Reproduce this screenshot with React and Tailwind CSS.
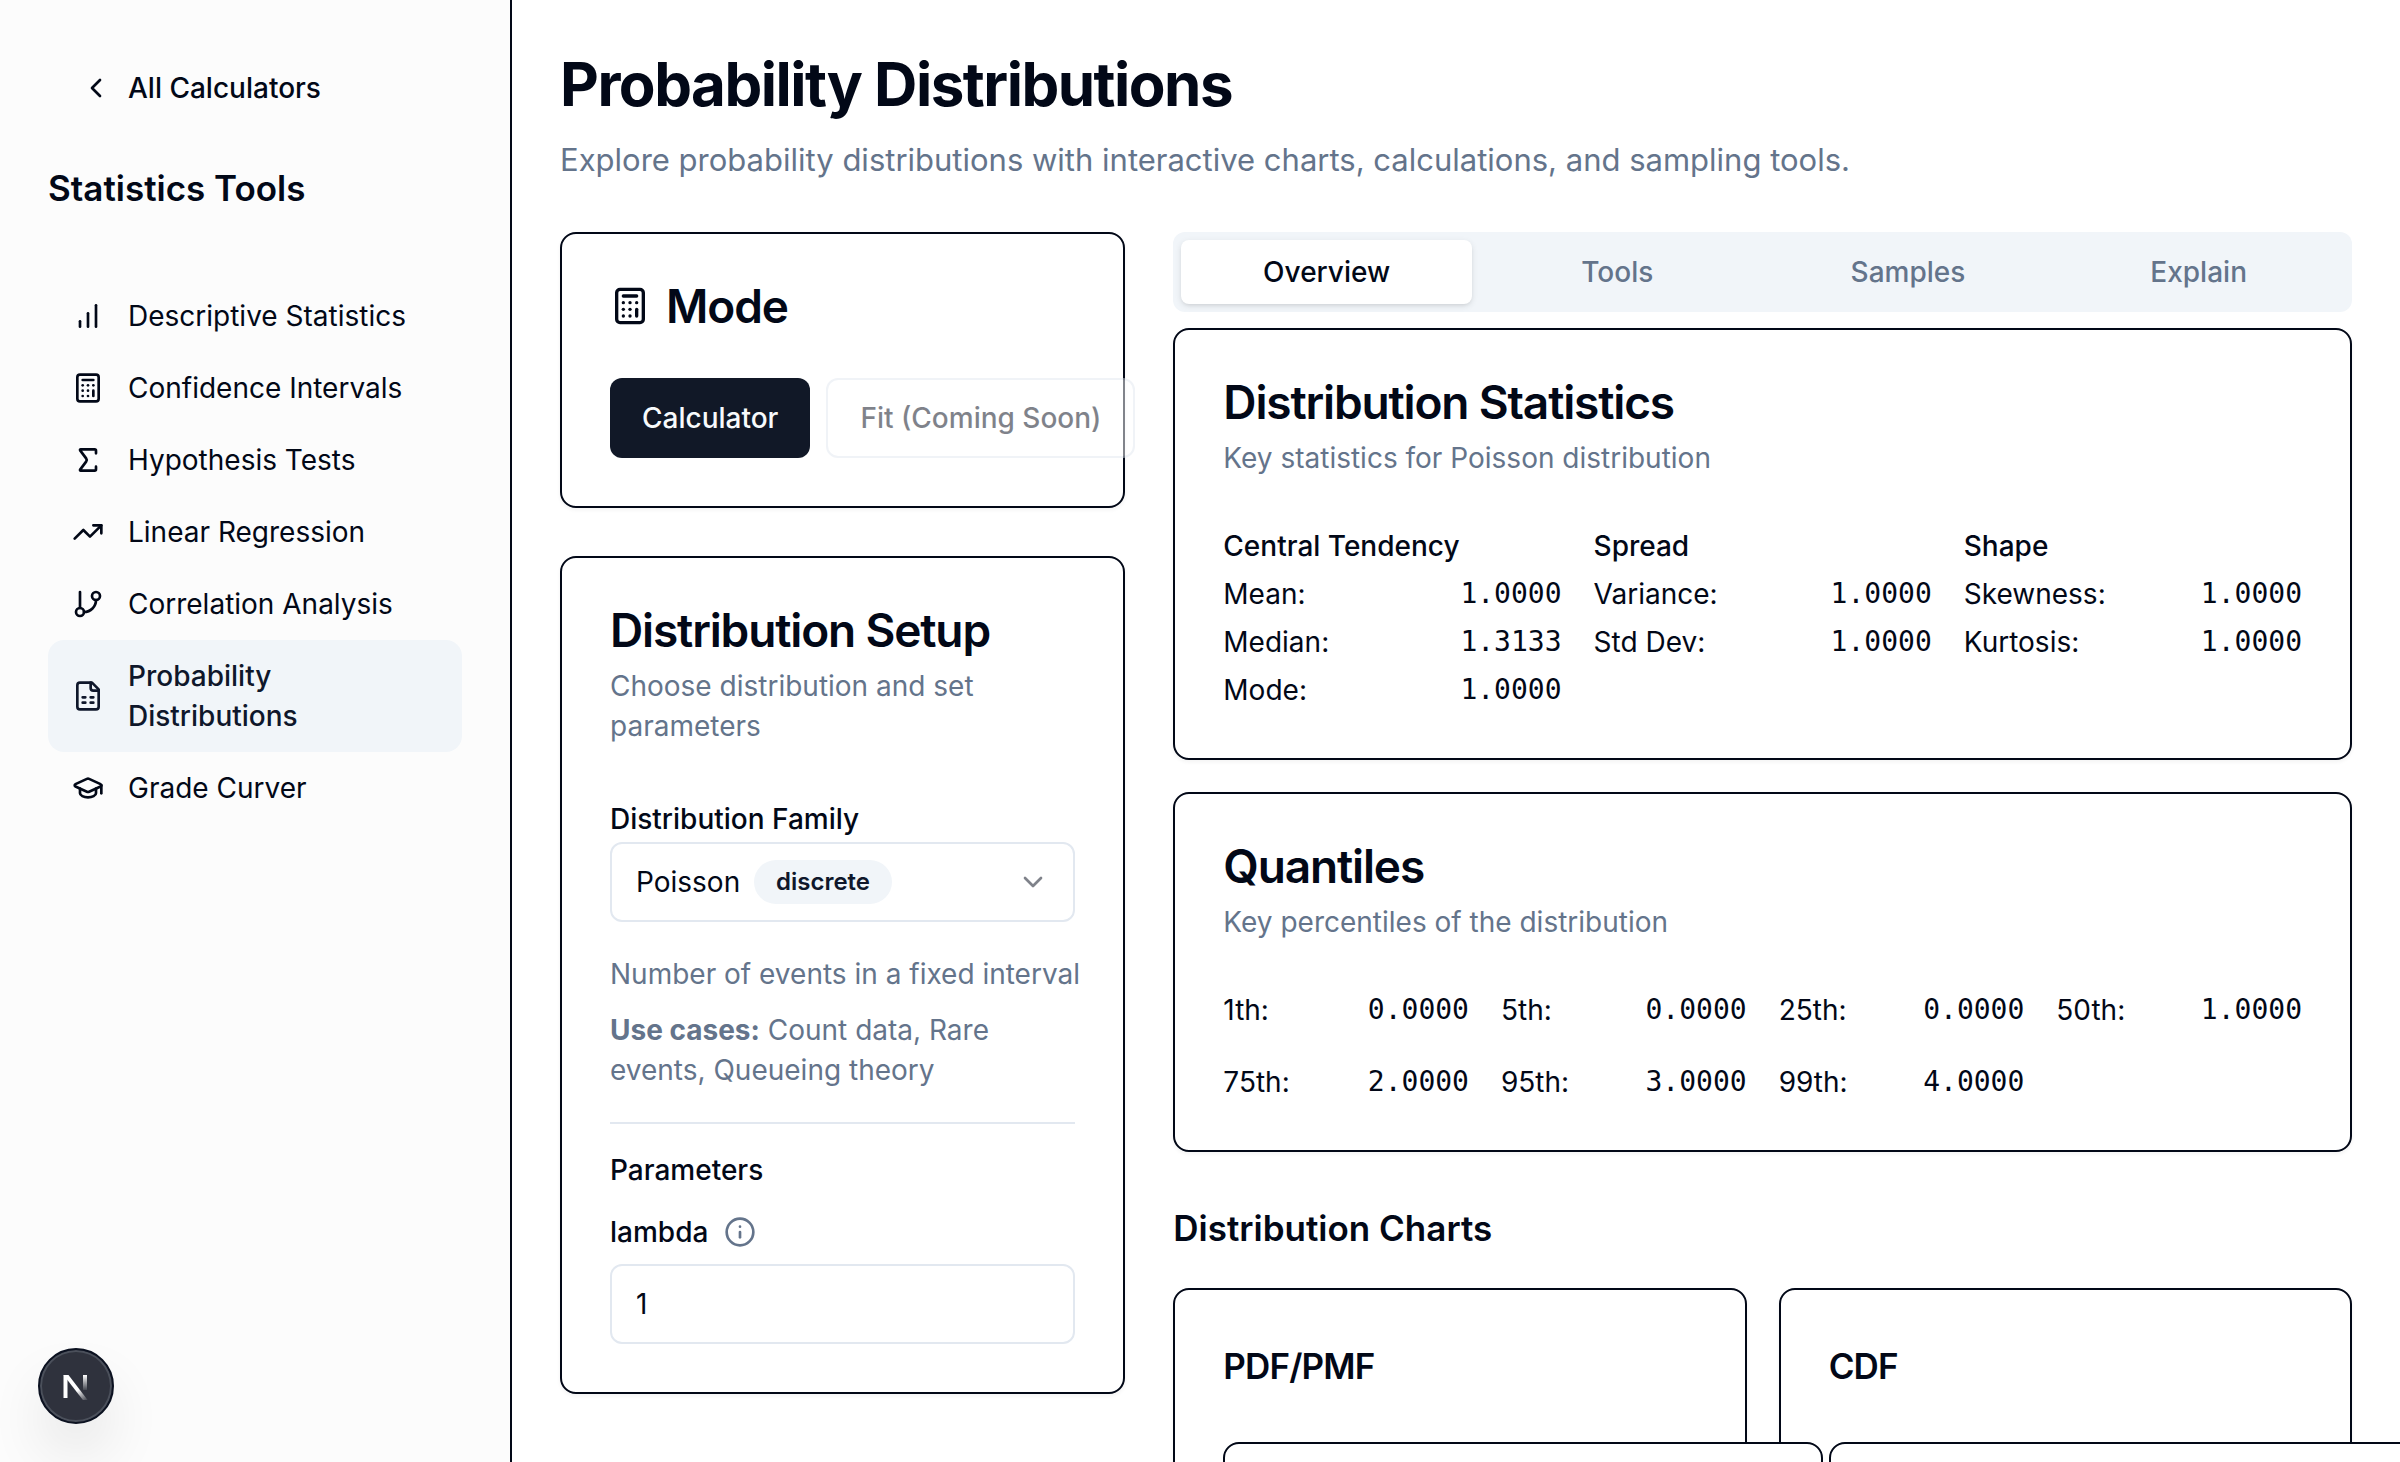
import { useState } from "react";
import { Calculator, ChevronDown, ChevronLeft, GraduationCap, Info, Sigma, TrendingUp, GitBranch } from "lucide-react";

function BarsIcon({ className }) {
  return (
    <svg viewBox="0 0 24 24" fill="none" stroke="currentColor" strokeWidth="2" strokeLinecap="round" strokeLinejoin="round" className={className} aria-hidden="true">
      <line x1="12" x2="12" y1="20" y2="10" />
      <line x1="18" x2="18" y1="20" y2="4" />
      <line x1="6" x2="6" y1="20" y2="16" />
    </svg>
  );
}

function SheetIcon({ className }) {
  return (
    <svg viewBox="0 0 24 24" fill="none" stroke="currentColor" strokeWidth="2" strokeLinecap="round" strokeLinejoin="round" className={className} aria-hidden="true">
      <path d="M15 2H6a2 2 0 0 0-2 2v16a2 2 0 0 0 2 2h12a2 2 0 0 0 2-2V7Z" />
      <path d="M14 2v4a2 2 0 0 0 2 2h4" />
      <path d="M8 13h2M14 13h2M8 17h2M14 17h2" />
    </svg>
  );
}

const tools = [
  { label: "Descriptive Statistics", icon: BarsIcon },
  { label: "Confidence Intervals", icon: Calculator },
  { label: "Hypothesis Tests", icon: Sigma },
  { label: "Linear Regression", icon: TrendingUp },
  { label: "Correlation Analysis", icon: GitBranch },
  { label: "Probability Distributions", icon: SheetIcon, active: true },
  { label: "Grade Curver", icon: GraduationCap },
];

const statistics = [
  { title: "Central Tendency", rows: [["Mean:", "1.0000"], ["Median:", "1.3133"], ["Mode:", "1.0000"]] },
  { title: "Spread", rows: [["Variance:", "1.0000"], ["Std Dev:", "1.0000"]] },
  { title: "Shape", rows: [["Skewness:", "1.0000"], ["Kurtosis:", "1.0000"]] },
];

const quantiles = [
  ["1th:", "0.0000"],
  ["5th:", "0.0000"],
  ["25th:", "0.0000"],
  ["50th:", "1.0000"],
  ["75th:", "2.0000"],
  ["95th:", "3.0000"],
  ["99th:", "4.0000"],
];

const tabs = ["Overview", "Tools", "Samples", "Explain"];

function Card({ children }) {
  return (
    <section className="rounded-2xl border-2 border-[#020817] bg-white p-12 shadow-[0_2px_4px_rgba(0,0,0,0.05)]">
      {children}
    </section>
  );
}

function CardHeader({ title, description }) {
  return (
    <header className="mb-12 flex flex-col gap-3">
      <h2 className="text-[46px] leading-[48px] font-semibold tracking-tight">{title}</h2>
      {description && <p className="text-[#64748b]">{description}</p>}
    </header>
  );
}

function Stat({ label, value }) {
  return (
    <div className="flex justify-between">
      <dt>{label}</dt>
      <dd className="font-['DejaVu_Sans_Mono',monospace]">{value}</dd>
    </div>
  );
}

function Sidebar() {
  return (
    <aside className="w-[512px] shrink-0 border-r-2 border-[#020817] bg-[#fcfcfc] p-12">
      <a href="#calculators" className="flex h-20 w-fit items-center gap-4 px-8 font-medium">
        <ChevronLeft className="size-8" />
        All Calculators
      </a>
      <h2 className="mt-8 text-[35px] leading-[56px] font-semibold">Statistics Tools</h2>
      <nav className="mt-16 flex flex-col">
        {tools.map(({ label, icon: Icon, active }) => (
          <a
            key={label}
            href="#tool"
            aria-current={active ? "page" : undefined}
            className={
              active
                ? "flex items-center gap-6 rounded-2xl bg-slate-100 px-6 py-4 font-medium text-slate-900"
                : "flex items-center gap-6 rounded-2xl px-6 py-4"
            }
          >
            <Icon className="size-8 shrink-0" />
            <span>{label}</span>
          </a>
        ))}
      </nav>
    </aside>
  );
}

function ModeCard() {
  return (
    <Card>
      <CardHeader
        title={
          <span className="flex items-center gap-4">
            <Calculator className="size-10" />
            Mode
          </span>
        }
      />
      <div className="flex gap-4">
        <button type="button" className="h-20 shrink-0 rounded-xl bg-[#111827] px-8 font-medium text-slate-50">
          Calculator
        </button>
        <button type="button" disabled className="h-20 shrink-0 rounded-xl border-2 border-slate-200 bg-white px-8 font-medium opacity-50">
          Fit (Coming Soon)
        </button>
      </div>
    </Card>
  );
}

function SetupCard() {
  const [lambda, setLambda] = useState("1");
  return (
    <Card>
      <CardHeader title="Distribution Setup" description="Choose distribution and set parameters" />
      <div className="flex flex-col gap-8">
        <div>
          <div className="text-[32px] leading-[48px]">
            <label htmlFor="family" className="text-[28px] leading-none font-medium">
              Distribution Family
            </label>
          </div>
          <div className="relative">
            <select id="family" className="block h-20 w-full appearance-none rounded-xl border-2 border-slate-200 bg-white px-6">
              <option>Poisson</option>
            </select>
            <span className="pointer-events-none absolute inset-y-0 right-[26px] left-36 flex items-center justify-between">
              <span className="rounded-full border-2 border-transparent bg-slate-100 px-5 py-1 text-2xl leading-8 font-semibold text-slate-900">
                discrete
              </span>
              <ChevronDown className="size-8 opacity-50" />
            </span>
          </div>
        </div>
        <div className="flex flex-col gap-4 text-[#64748b]">
          <p className="whitespace-nowrap">Number of events in a fixed interval</p>
          <p>
            <strong>Use cases:</strong> Count data, Rare events, Queueing theory
          </p>
        </div>
        <hr className="border-t-2 border-slate-200" />
        <h3 className="leading-none font-medium">Parameters</h3>
        <div className="flex flex-col gap-4">
          <div className="flex items-center gap-4">
            <label htmlFor="lambda" className="leading-none font-medium">
              lambda
            </label>
            <Info className="size-8 text-[#64748b]" />
          </div>
          <input
            id="lambda"
            type="text"
            inputMode="decimal"
            value={lambda}
            onChange={(e) => setLambda(e.target.value)}
            className="h-20 w-full rounded-xl border-2 border-slate-200 bg-white px-6"
          />
        </div>
      </div>
    </Card>
  );
}

function TabBar() {
  const [current, setCurrent] = useState("Overview");
  return (
    <div role="tablist" className="grid grid-cols-4 rounded-xl bg-slate-100 p-2">
      {tabs.map((tab) => (
        <button
          key={tab}
          type="button"
          role="tab"
          aria-selected={tab === current}
          onClick={() => setCurrent(tab)}
          className={
            tab === current
              ? "rounded-lg bg-white py-3 font-medium shadow-[0_2px_6px_rgba(0,0,0,0.1),0_2px_4px_-2px_rgba(0,0,0,0.1)]"
              : "rounded-lg py-3 font-medium text-[#64748b]"
          }
        >
          {tab}
        </button>
      ))}
    </div>
  );
}

function ChartCard({ title }) {
  return (
    <Card>
      <h3 className="mb-12 text-[35px] leading-[56px] font-semibold tracking-tight">{title}</h3>
      <div className="relative z-10 h-[600px] w-[600px] rounded-2xl border-2 border-[#020817] bg-white" />
    </Card>
  );
}

function DevBadge() {
  return (
    <button
      type="button"
      aria-label="Open developer tools"
      className="fixed bottom-[38px] left-[38px] flex size-[76px] items-center justify-center rounded-full border-2 border-[#0b1120] bg-[#2f323d] shadow-[inset_0_0_0_2px_#4b505b,0_32px_64px_-16px_rgba(0,0,0,0.24)]"
    >
      <svg viewBox="0 0 28 28" fill="none" className="size-7" aria-hidden="true">
        <defs>
          <linearGradient id="diag" gradientUnits="userSpaceOnUse" x1="17" y1="17" x2="25" y2="28">
            <stop stopColor="#fff" />
            <stop offset="1" stopColor="#fff" stopOpacity="0.1" />
          </linearGradient>
          <linearGradient id="stem" gradientUnits="userSpaceOnUse" x1="23" y1="3" x2="23" y2="18">
            <stop stopColor="#fff" />
            <stop offset="1" stopColor="#fff" stopOpacity="0.1" />
          </linearGradient>
        </defs>
        <path d="M3.5 26V3" stroke="#fff" strokeWidth="4" />
        <path d="M1.5 3h5L26 28.5 22.5 30 1.5 3Z" fill="url(#diag)" />
        <path d="M23 3v15" stroke="url(#stem)" strokeWidth="4" />
      </svg>
    </button>
  );
}

export default function App() {
  return (
    <div className="flex h-screen overflow-hidden bg-white font-[Inter,'Liberation_Sans',sans-serif] text-[28px] leading-[40px] text-[#020817]">
      <Sidebar />
      <main className="min-w-0 flex-1 overflow-hidden p-12">
        <h1 className="text-6xl leading-[72px] font-bold tracking-tight">Probability Distributions</h1>
        <p className="mt-4 text-[31px] leading-[48px] text-[#64748b]">
          Explore probability distributions with interactive charts, calculations, and sampling tools.
        </p>
        <div className="mt-12 grid grid-cols-3 items-start gap-12">
          <div className="flex flex-col gap-12">
            <ModeCard />
            <SetupCard />
          </div>
          <div className="col-span-2 flex flex-col gap-12">
            <div>
              <TabBar />
              <div className="mt-4 flex flex-col gap-8">
                <Card>
                  <CardHeader title="Distribution Statistics" description="Key statistics for Poisson distribution" />
                  <div className="grid grid-cols-3 gap-8">
                    {statistics.map((group) => (
                      <div key={group.title} className="flex flex-col gap-2">
                        <h3 className="font-medium">{group.title}</h3>
                        <dl className="flex flex-col gap-2">
                          {group.rows.map(([label, value]) => (
                            <Stat key={label} label={label} value={value} />
                          ))}
                        </dl>
                      </div>
                    ))}
                  </div>
                </Card>
                <Card>
                  <CardHeader title="Quantiles" description="Key percentiles of the distribution" />
                  <dl className="grid grid-cols-4 gap-8">
                    {quantiles.map(([label, value]) => (
                      <Stat key={label} label={label} value={value} />
                    ))}
                  </dl>
                </Card>
              </div>
            </div>
            <div>
              <h2 className="mb-8 text-[35px] leading-[56px] font-semibold">Distribution Charts</h2>
              <div className="grid grid-cols-2 gap-8">
                <ChartCard title="PDF/PMF" />
                <ChartCard title="CDF" />
              </div>
            </div>
          </div>
        </div>
      </main>
      <DevBadge />
    </div>
  );
}
